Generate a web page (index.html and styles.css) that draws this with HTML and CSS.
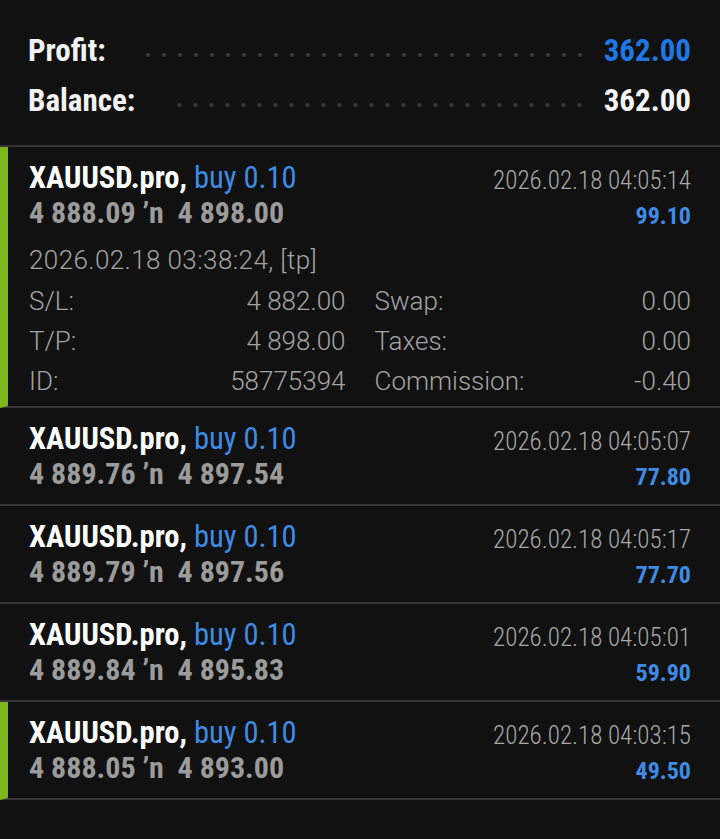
FILE: index.html
```html
<!DOCTYPE html>
<html>
<head>
<meta charset="utf-8">
<link rel="stylesheet" href="styles.css">
</head>
<body>
<div class="summary">
  <div class="sum-row"><span class="sum-label">Profit:</span><span class="leader lead-profit"></span><span class="sum-value blue">362.00</span></div>
  <div class="sum-row"><span class="sum-label">Balance:</span><span class="leader"></span><span class="sum-value">362.00</span></div>
</div>

<div class="deal marked expanded">
  <div class="deal-head">
    <div class="deal-left">
      <div class="title">XAUUSD.pro, <span class="buy">buy 0.10</span></div>
      <div class="prices">4 888.09 ʼn&nbsp; 4 898.00</div>
    </div>
    <div class="deal-right">
      <div class="time">2026.02.18 04:05:14</div>
      <div class="profit">99.10</div>
    </div>
  </div>
  <div class="open-time">2026.02.18 03:38:24, [tp]</div>
  <div class="details">
    <div class="pair"><span>S/L:</span><span>4 882.00</span></div>
    <div class="pair"><span>Swap:</span><span>0.00</span></div>
    <div class="pair"><span>T/P:</span><span>4 898.00</span></div>
    <div class="pair"><span>Taxes:</span><span>0.00</span></div>
    <div class="pair"><span>ID:</span><span>58775394</span></div>
    <div class="pair"><span>Commission:</span><span>-0.40</span></div>
  </div>
</div>

<div class="deal">
  <div class="deal-head">
    <div class="deal-left">
      <div class="title">XAUUSD.pro, <span class="buy">buy 0.10</span></div>
      <div class="prices">4 889.76 ʼn&nbsp; 4 897.54</div>
    </div>
    <div class="deal-right">
      <div class="time">2026.02.18 04:05:07</div>
      <div class="profit">77.80</div>
    </div>
  </div>
</div>

<div class="deal">
  <div class="deal-head">
    <div class="deal-left">
      <div class="title">XAUUSD.pro, <span class="buy">buy 0.10</span></div>
      <div class="prices">4 889.79 ʼn&nbsp; 4 897.56</div>
    </div>
    <div class="deal-right">
      <div class="time">2026.02.18 04:05:17</div>
      <div class="profit">77.70</div>
    </div>
  </div>
</div>

<div class="deal">
  <div class="deal-head">
    <div class="deal-left">
      <div class="title">XAUUSD.pro, <span class="buy">buy 0.10</span></div>
      <div class="prices">4 889.84 ʼn&nbsp; 4 895.83</div>
    </div>
    <div class="deal-right">
      <div class="time">2026.02.18 04:05:01</div>
      <div class="profit">59.90</div>
    </div>
  </div>
</div>

<div class="deal marked">
  <div class="deal-head">
    <div class="deal-left">
      <div class="title">XAUUSD.pro, <span class="buy">buy 0.10</span></div>
      <div class="prices">4 888.05 ʼn&nbsp; 4 893.00</div>
    </div>
    <div class="deal-right">
      <div class="time">2026.02.18 04:03:15</div>
      <div class="profit">49.50</div>
    </div>
  </div>
</div>
</body>
</html>
```

FILE: styles.css
```css
html, body {
  margin: 0;
  padding: 0;
  background: #111111;
}
body {
  width: 720px;
  height: 839px;
  overflow: hidden;
  font-family: "Roboto Condensed", Roboto, "Liberation Sans", sans-serif;
  color: #ffffff;
}
.summary {
  padding: 26px 29px 19px 28px;
  border-bottom: 2px solid #363636;
}
.sum-row {
  display: flex;
  align-items: center;
  height: 50px;
  line-height: 50px;
  font-size: 31px;
  font-weight: 700;
}
.sum-label { color: #f2f2f2; }
.leader {
  flex: 1;
  height: 4px;
  margin: 8px 16px 0 38px;
  background-image: radial-gradient(circle, #3a3a3a 1.7px, transparent 2.2px);
  background-size: 16px 4px;
  background-repeat: repeat-x;
  background-position: right center;
}
.sum-value { color: #f5f5f5; }
.blue { color: #1f77e3; }

.deal {
  border-bottom: 2px solid #363636;
  padding: 15px 29px 11px 29px;
}
.deal.marked {
  border-left: 8px solid #7db71b;
  padding-left: 21px;
}
.deal-head {
  display: flex;
  justify-content: space-between;
}
.title {
  font-size: 30.5px;
  line-height: 32px;
  font-weight: 700;
  color: #ffffff;
}
.buy {
  font-weight: 400;
  color: #3f8be4;
}
.prices {
  font-size: 30px;
  line-height: 38px;
  font-weight: 700;
  color: #9b9b9b;
}
.deal-right {
  text-align: right;
  padding-top: 5px;
}
.time {
  font-size: 25px;
  line-height: 28px;
  font-weight: 300;
  color: #a8a8a8;
}
.profit {
  margin-top: 6px;
  font-size: 24px;
  line-height: 30px;
  font-weight: 700;
  color: #3f8be4;
}
.deal.expanded { padding-bottom: 5px; }
.open-time {
  margin-top: 14px;
  font-family: Roboto, "Liberation Sans", sans-serif;
  font-size: 26px;
  line-height: 28px;
  letter-spacing: 0.4px;
  font-weight: 300;
  color: #a3a3a3;
}
.details {
  display: grid;
  grid-template-columns: 1fr 1fr;
  column-gap: 29px;
  margin-top: 7px;
  font-family: Roboto, "Liberation Sans", sans-serif;
  font-size: 26px;
  line-height: 40px;
  font-weight: 300;
  color: #a3a3a3;
}
.pair {
  display: flex;
  justify-content: space-between;
}
```
